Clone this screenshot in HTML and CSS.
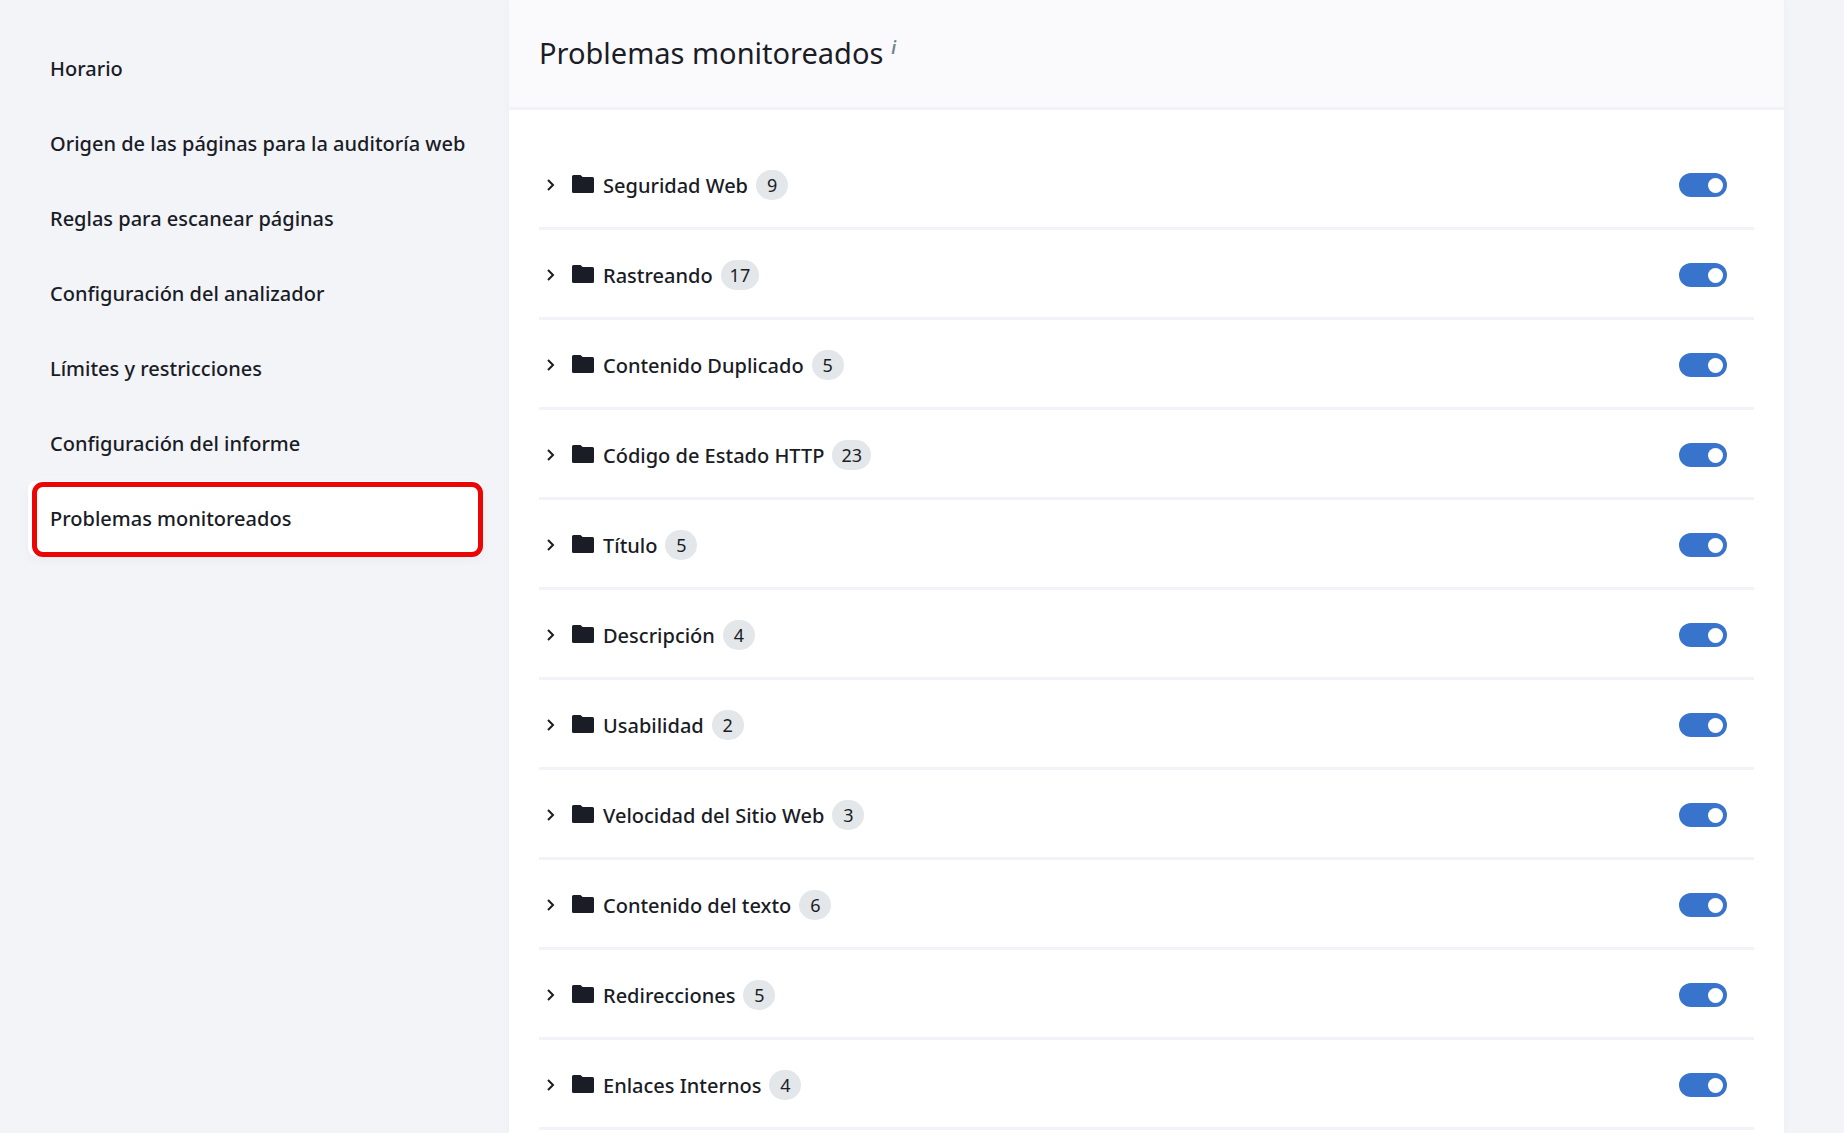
FILE: index.html
```html
<!DOCTYPE html>
<html lang="es">
<head>
  <meta charset="utf-8">
  <title>Problemas monitoreados</title>
  <link rel="stylesheet" href="styles.css">
</head>
<body>
  <svg class="sprite" aria-hidden="true">
    <symbol id="chevron" viewBox="0 0 8 12"><path d="M1 1l5 5-5 5" fill="none" stroke="currentColor" stroke-width="2"/></symbol>
    <symbol id="folder" viewBox="0 0 22 18"><path d="M1.500 0h7l2.200 2H20.500a1.500 1.500 0 0 1 1.500 1.500v13a1.500 1.500 0 0 1-1.500 1.500h-19a1.500 1.500 0 0 1-1.500-1.500v-15a1.500 1.500 0 0 1 1.500-1.500z" fill="currentColor"/></symbol>
  </svg>

  <nav class="sidebar">
    <a class="nav-link" href="#horario">Horario</a>
    <a class="nav-link" href="#origen">Origen de las páginas para la auditoría web</a>
    <a class="nav-link" href="#reglas">Reglas para escanear páginas</a>
    <a class="nav-link" href="#analizador">Configuración del analizador</a>
    <a class="nav-link" href="#limites">Límites y restricciones</a>
    <a class="nav-link" href="#informe">Configuración del informe</a>
    <a class="nav-link active" href="#problemas">Problemas monitoreados</a>
  </nav>

  <main class="content">
    <header class="content-header">
      <h1>Problemas monitoreados</h1>
      <i class="info">i</i>
    </header>
    <div class="groups" id="groups"></div>
  </main>

  <script src="script.js"></script>
</body>
</html>
```
FILE: styles.css
```css
* { box-sizing: border-box; }

body {
  margin: 0;
  min-height: 100vh;
  display: flex;
  background: #f2f4f8;
  color: #1a1c26;
  font-family: "Noto Sans", "Open Sans", sans-serif;
  font-size: 20px;
  font-weight: 500;
}

.sprite { display: none; }

/* Sidebar */
.sidebar {
  flex: 0 0 509px;
  min-width: 0;
  padding: 31px 26px 0 28px;
}
.nav-link {
  display: flex;
  align-items: center;
  height: 75px;
  padding: 0 16px 0 22px;
  border-radius: 8px;
  color: inherit;
  text-decoration: none;
  white-space: nowrap;
}
.nav-link.active {
  position: relative;
  background: #fff;
  box-shadow: 0 4px 10px rgba(30, 40, 80, 0.04);
}
.nav-link.active::after {
  content: "";
  position: absolute;
  inset: 1px 0 -1px 4px;
  border: 5px solid #eb0606;
  border-radius: 11px;
}

/* Main panel */
.content {
  flex: 1;
  min-width: 0;
  margin-right: 60px;
  background: #fff;
  box-shadow: 0 0 8px rgba(30, 40, 80, 0.03);
}
.content-header {
  display: flex;
  align-items: flex-start;
  gap: 8px;
  height: 110px;
  padding: 31px 30px 0;
  background: #fafafc;
  border-bottom: 3px solid #f2f3f8;
}
h1 {
  margin: 0;
  font-size: 29px;
  font-weight: 400;
  line-height: 44px;
}
.info {
  color: #6d838d;
  font-size: 17px;
  font-weight: 600;
  line-height: 34px;
}

.groups { padding: 30px 30px 0; }
.group {
  display: flex;
  align-items: center;
  height: 90px;
  padding: 3px 27px 0 4px;
  border-bottom: 3px solid #f2f3f8;
}
.expand {
  display: flex;
  align-items: center;
  justify-content: center;
  width: 16px;
  height: 24px;
  padding: 0;
  border: none;
  background: none;
  color: inherit;
  cursor: pointer;
}
.chevron { width: 8px; height: 12px; }
.folder { width: 22px; height: 18px; margin: 0 9px 2px 13px; }
.count {
  min-width: 32px;
  height: 30px;
  margin-left: 8px;
  padding: 0 9px;
  border-radius: 15px;
  background: #e3e7ea;
  font-size: 18px;
  font-weight: 400;
  line-height: 30px;
  text-align: center;
}

/* Toggle */
.toggle {
  appearance: none;
  display: flex;
  align-items: center;
  width: 48px;
  height: 24px;
  margin: 0 0 0 auto;
  padding: 0 4px;
  border-radius: 12px;
  background: #b4bcc8;
  cursor: pointer;
}
.toggle::before {
  content: "";
  width: 15px;
  height: 15px;
  border-radius: 50%;
  background: #fff;
}
.toggle:checked {
  justify-content: flex-end;
  background: #3873cc;
}
```
FILE: script.js
```js
const groups = [
  ['Seguridad Web', 9],
  ['Rastreando', 17],
  ['Contenido Duplicado', 5],
  ['Código de Estado HTTP', 23],
  ['Título', 5],
  ['Descripción', 4],
  ['Usabilidad', 2],
  ['Velocidad del Sitio Web', 3],
  ['Contenido del texto', 6],
  ['Redirecciones', 5],
  ['Enlaces Internos', 4]
];

document.getElementById('groups').innerHTML = groups.map(([name, count], i) => `
  <div class="group">
    <button class="expand" type="button" aria-label="${name}"><svg class="chevron"><use href="#chevron"/></svg></button>
    <svg class="folder"><use href="#folder"/></svg>
    <label for="group-${i}">${name}</label>
    <span class="count">${count}</span>
    <input class="toggle" type="checkbox" id="group-${i}" checked>
  </div>`).join('');
```
